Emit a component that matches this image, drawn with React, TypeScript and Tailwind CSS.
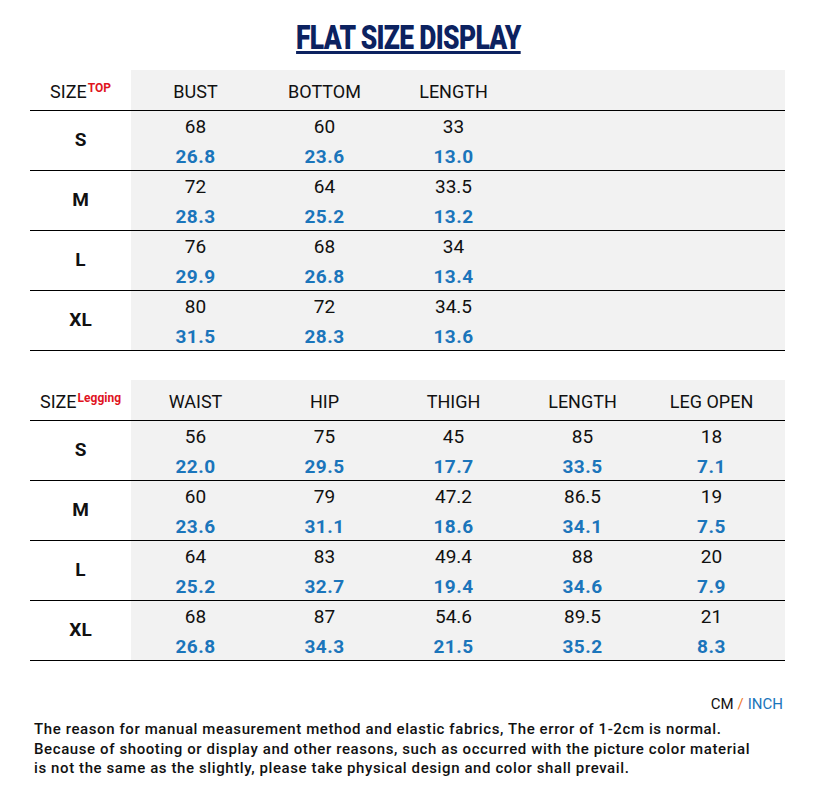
type Row = { size: string; cm: string[]; inch: string[] }

const topRows: Row[] = [
  { size: 'S', cm: ['68', '60', '33'], inch: ['26.8', '23.6', '13.0'] },
  { size: 'M', cm: ['72', '64', '33.5'], inch: ['28.3', '25.2', '13.2'] },
  { size: 'L', cm: ['76', '68', '34'], inch: ['29.9', '26.8', '13.4'] },
  { size: 'XL', cm: ['80', '72', '34.5'], inch: ['31.5', '28.3', '13.6'] },
]

const legRows: Row[] = [
  { size: 'S', cm: ['56', '75', '45', '85', '18'], inch: ['22.0', '29.5', '17.7', '33.5', '7.1'] },
  { size: 'M', cm: ['60', '79', '47.2', '86.5', '19'], inch: ['23.6', '31.1', '18.6', '34.1', '7.5'] },
  { size: 'L', cm: ['64', '83', '49.4', '88', '20'], inch: ['25.2', '32.7', '19.4', '34.6', '7.9'] },
  { size: 'XL', cm: ['68', '87', '54.6', '89.5', '21'], inch: ['26.8', '34.3', '21.5', '35.2', '8.3'] },
]

function SizeTable({ tag, headers, rows }: { tag: string; headers: string[]; rows: Row[] }) {
  return (
    <div className="text-[#111]">
      <div className="flex h-[41px] border-b border-black">
        <div className="w-[101px] flex items-center justify-center text-[18px] pt-[3px]">
          <span>SIZE</span>
          <span className="text-[#e0141e] font-bold text-[12px] leading-none self-start mt-[9px] ml-px">{tag}</span>
        </div>
        <div className="flex-1 bg-[#f2f2f2] flex">
          {headers.map((h) => (
            <div key={h} className="w-[129px] flex items-center justify-center text-[18px] pt-[2px]">
              {h}
            </div>
          ))}
        </div>
      </div>
      {rows.map((r) => (
        <div key={r.size} className="flex h-[60px] border-b border-black">
          <div className="w-[101px] flex items-center justify-center font-bold text-[19px]">{r.size}</div>
          <div className="flex-1 bg-[#f2f2f2] flex">
            {r.cm.map((v, i) => (
              <div key={i} className="w-[129px] flex flex-col items-center pt-px">
                <div className="h-[30px] leading-[30px] text-[19px]">{v}</div>
                <div className="h-[29px] leading-[29px] text-[19px] font-bold text-[#1b75bb] tracking-[0.5px]">
                  {r.inch[i]}
                </div>
              </div>
            ))}
          </div>
        </div>
      ))}
    </div>
  )
}

export default function App() {
  return (
    <div className="w-[816px] h-[798px] bg-white font-['Roboto',sans-serif] overflow-hidden">
      <div className="h-[70px] flex justify-center pt-[19px]">
        <h1 className="text-[33px] leading-[38px] font-black text-[#0c2260] underline decoration-[3px] underline-offset-[2px] scale-x-[0.8] tracking-tight">
          FLAT SIZE DISPLAY
        </h1>
      </div>
      <div className="pl-[30px] pr-[31px]">
        <SizeTable tag="TOP" headers={['BUST', 'BOTTOM', 'LENGTH']} rows={topRows} />
        <div className="h-[29px]" />
        <SizeTable tag="Legging" headers={['WAIST', 'HIP', 'THIGH', 'LENGTH', 'LEG OPEN']} rows={legRows} />
        <div className="flex justify-end pt-[33px] pr-[2px] text-[15px] leading-[20px]">
          <span className="text-[#111]">CM</span>
          <span className="text-[#f07a2a] mx-[4px]">/</span>
          <span className="text-[#1b75bb]">INCH</span>
        </div>
        <p className="mt-[6px] pl-[4px] text-[15px] leading-[19.5px] font-medium text-[#111] tracking-[0.6px]">
          The reason for manual measurement method and elastic fabrics, The error of 1-2cm is normal.
          <br />
          Because of shooting or display and other reasons, such as occurred with the picture color material
          <br />
          is not the same as the slightly, please take physical design and color shall prevail.
        </p>
      </div>
    </div>
  )
}
